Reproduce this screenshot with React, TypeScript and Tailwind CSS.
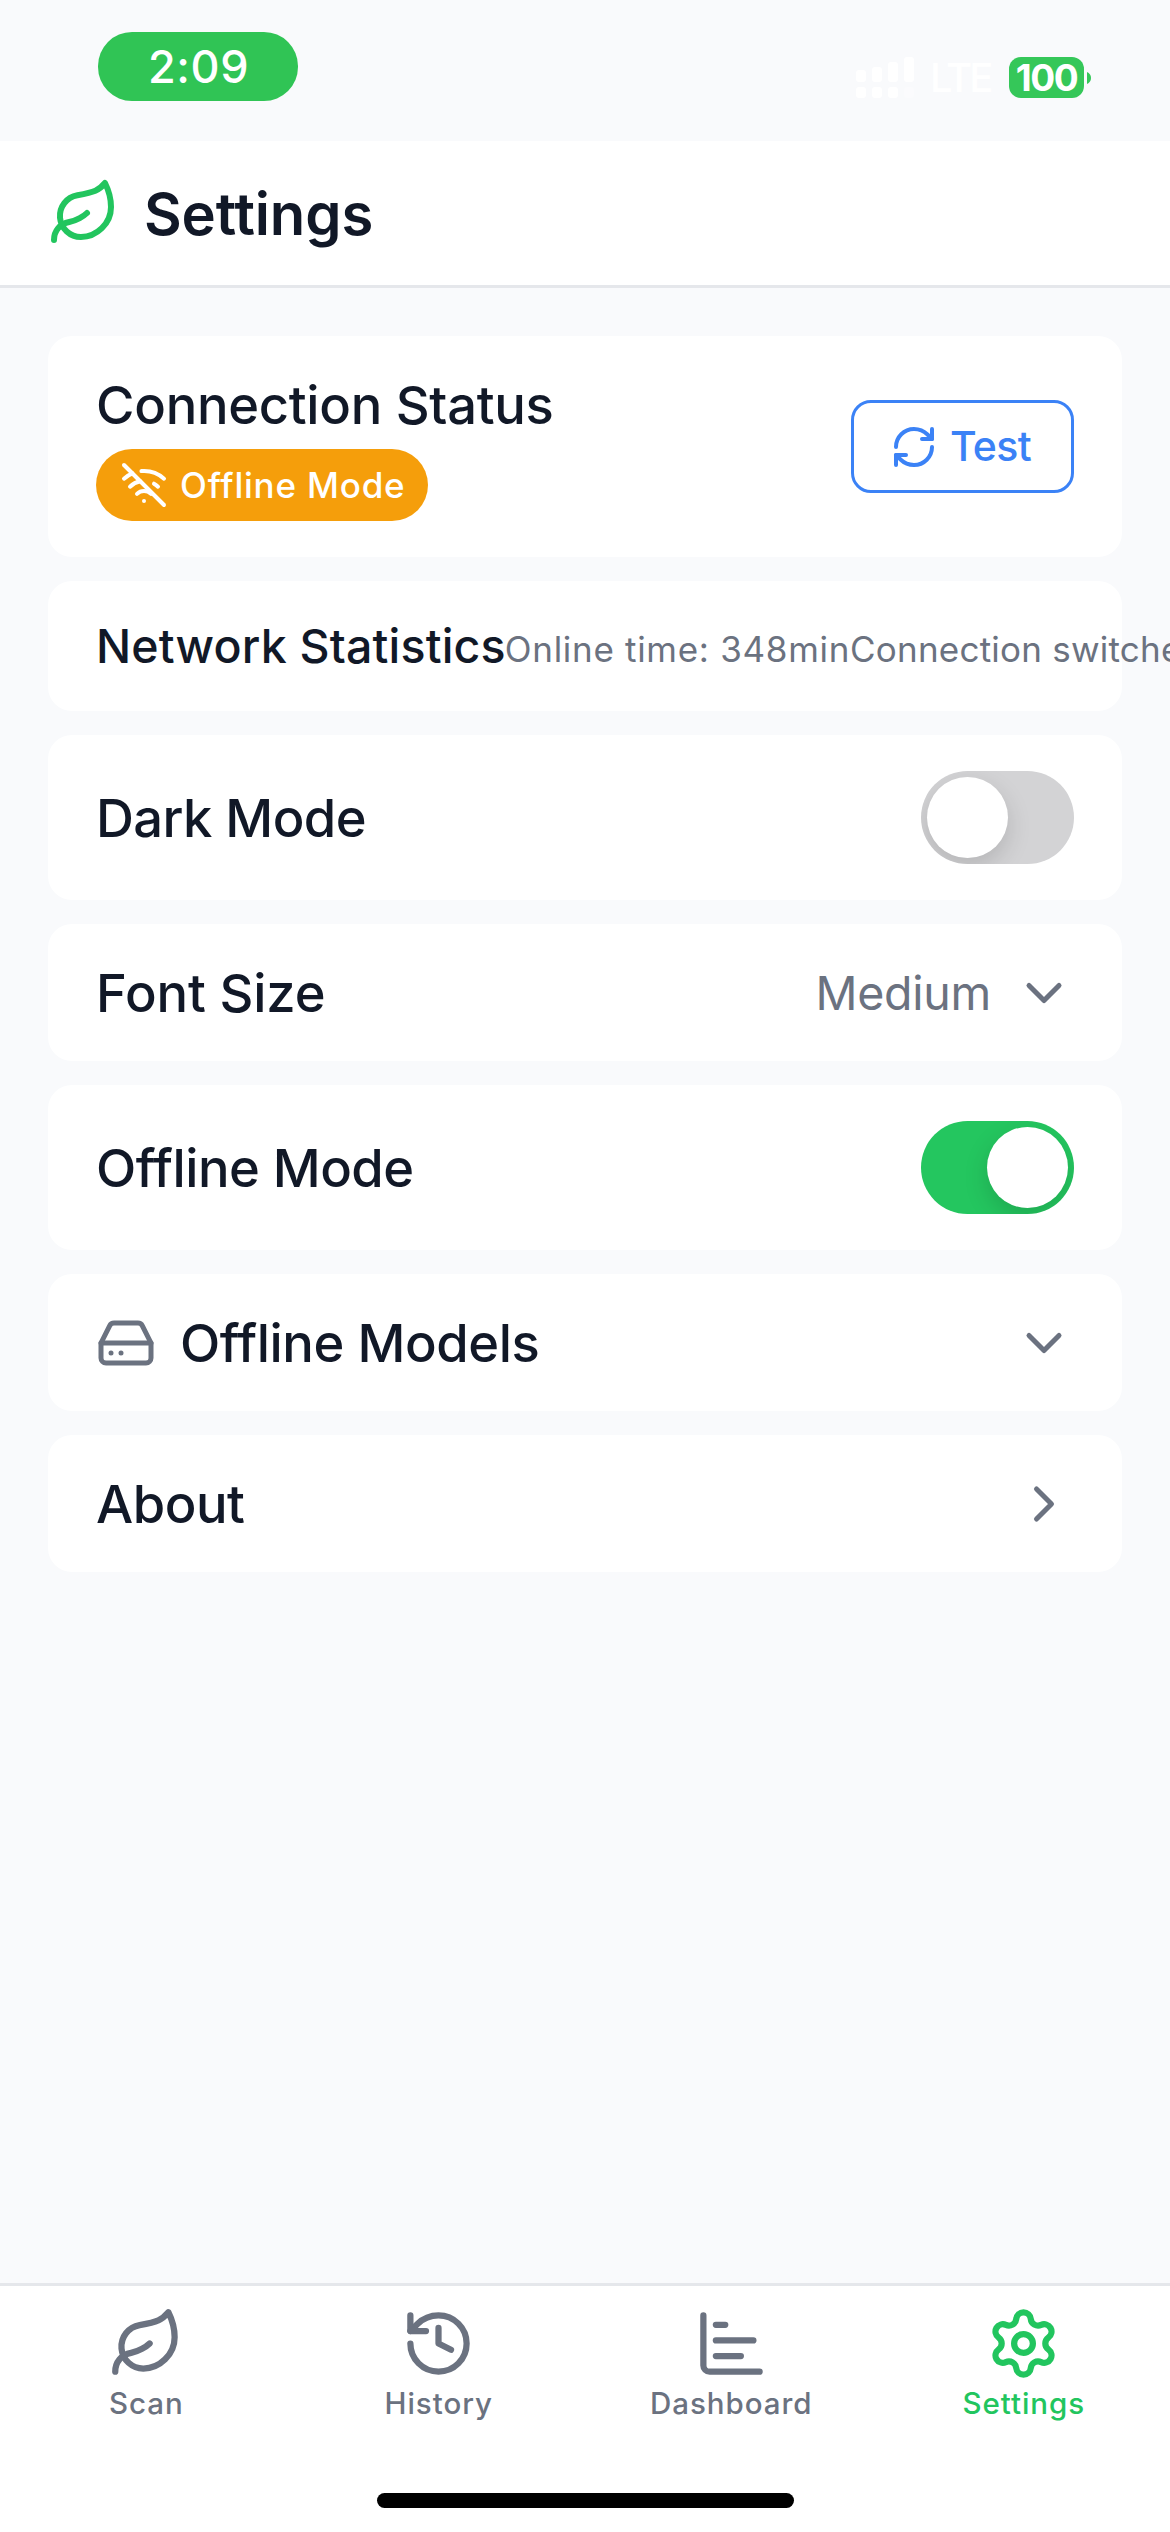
import React, { useState } from 'react';
import {
  ChartBar,
  ChevronDown,
  ChevronRight,
  HardDrive,
  History,
  Leaf,
  RefreshCw,
  Settings,
  WifiOff,
  type LucideIcon
} from 'lucide-react';
import clsx from 'clsx';

interface Tab {
  id: string;
  label: string;
  icon: LucideIcon;
}

const TABS: Tab[] = [
  { id: 'scan', label: 'Scan', icon: Leaf },
  { id: 'history', label: 'History', icon: History },
  { id: 'dashboard', label: 'Dashboard', icon: ChartBar },
  { id: 'settings', label: 'Settings', icon: Settings }
];

const StatusBar = () => (
  <div className="flex h-[141px] shrink-0 items-start justify-between pl-[98px] pr-[79px] pt-8 text-white">
    <div className="flex h-[69px] w-[200px] items-center justify-center rounded-[34px] bg-[#30c455]">
      <span className="pl-px text-[45px] font-[450] leading-none tracking-[0.6px]">2:09</span>
    </div>

    <div className="mt-[25px] flex h-[41px] items-center">
      <svg width="58" height="41" viewBox="0 0 58 41" fill="currentColor">
        <rect x="0" y="13" width="10" height="12" rx="3" />
        <rect x="16" y="10" width="10" height="15" rx="3" />
        <rect x="32" y="5" width="10" height="20" rx="3" />
        <rect x="48" y="0" width="10" height="25" rx="3" />
        <rect x="0" y="30" width="10" height="11" rx="3" />
        <rect x="16" y="30" width="10" height="11" rx="3" />
        <rect x="32" y="30" width="10" height="11" rx="3" />
        <rect x="48" y="30" width="10" height="11" rx="3" opacity="0.3" />
      </svg>
      <span className="ml-4 w-[61px] whitespace-nowrap text-[40px] font-medium leading-none tracking-[-2.9px]">LTE</span>
      <div className="ml-[18px] flex h-[41px] w-[75px] items-center justify-center rounded-[12px] bg-[#35c759]">
        <span className="text-[37px] font-bold leading-none tracking-[-1.4px]">100</span>
      </div>
      <svg className="ml-[3px]" width="4" height="12" viewBox="0 0 4 12">
        <path d="M0 0C2.6 1 4 3.4 4 6s-1.4 5-4 6Z" fill="#35c759" />
      </svg>
    </div>
  </div>
);

const Card = ({ className, children }: { className?: string; children: React.ReactNode }) => (
  <div className={clsx('flex shrink-0 items-center justify-between rounded-3xl bg-white px-12', className)}>
    {children}
  </div>
);

const Toggle = ({ on, onChange }: { on: boolean; onChange: () => void }) => (
  <button
    role="switch"
    aria-checked={on}
    onClick={onChange}
    className={clsx(
      'flex h-[93px] w-[153px] items-center overflow-hidden rounded-full px-1.5',
      on ? 'justify-end bg-[#24c65f]' : 'justify-start bg-[#d3d3d5]'
    )}
  >
    <span className="size-[81px] rounded-full bg-white shadow-[0_9px_24px_rgba(0,0,0,0.15)]" />
  </button>
);

export default function App() {
  const [darkMode, setDarkMode] = useState(false);
  const [offlineMode, setOfflineMode] = useState(true);
  const [activeTab, setActiveTab] = useState('settings');

  return (
    <div className="flex h-[2532px] w-[1170px] flex-col overflow-hidden bg-[#f9fafc] font-['Inter',sans-serif] text-[#111827]">
      <StatusBar />

      <header className="flex h-[147px] shrink-0 items-center gap-6 border-b-[3px] border-[#e5e7eb] bg-white px-12">
        <Leaf size={72} className="text-[#22c55e]" />
        <h1 className="pt-0.5 text-[58px] font-semibold leading-none tracking-[-0.1px]">Settings</h1>
      </header>

      <main className="flex flex-1 flex-col gap-6 px-12 pt-12">
        <Card className="h-[221px]">
          <div className="flex flex-col items-start gap-[11px]">
            <h2 className="text-[52.5px] font-medium leading-[66px] tracking-[-0.29px]">Connection Status</h2>
            <div className="flex h-[72px] w-[332px] items-center gap-3 rounded-full bg-[#f59e0b] pl-6 text-white">
              <WifiOff size={48} />
              <span className="whitespace-nowrap text-[35px] font-[450] leading-none tracking-[0.8px]">Offline Mode</span>
            </div>
          </div>
          <button className="flex h-[93px] w-[223px] items-center gap-3 rounded-[20px] border-[3px] border-[#3b82f6] pl-9 text-[#3b82f6]">
            <RefreshCw size={48} />
            <span className="text-[41px] font-medium leading-none tracking-[-0.7px]">Test</span>
          </button>
        </Card>

        <Card className="h-[130px] whitespace-nowrap">
          <div className="flex w-0 items-center">
            <h3 className="-mr-px text-[46.5px] font-medium leading-none tracking-[0.18px]">Network Statistics</h3>
            <span className="pt-[7px] text-[35px] leading-none tracking-[0.7px] text-[#6b7280]">Online time: 348min</span>
            <span className="pt-[7px] text-[35px] leading-none tracking-[0.22px] text-[#6b7280]">Connection switches</span>
          </div>
        </Card>

        <Card className="h-[165px]">
          <span className="pt-px text-[52.5px] font-medium leading-none tracking-[-0.57px]">Dark Mode</span>
          <Toggle on={darkMode} onChange={() => setDarkMode(!darkMode)} />
        </Card>

        <Card className="h-[137px]">
          <span className="pt-px text-[52.5px] font-medium leading-none tracking-[-0.14px]">Font Size</span>
          <div className="flex items-center gap-[23px] text-[#6b7280]">
            <span className="pt-px text-[46.5px] leading-none tracking-[-0.27px]">Medium</span>
            <ChevronDown size={60} />
          </div>
        </Card>

        <Card className="h-[165px]">
          <span className="pt-px text-[52.5px] font-medium leading-none tracking-[-0.51px]">Offline Mode</span>
          <Toggle on={offlineMode} onChange={() => setOfflineMode(!offlineMode)} />
        </Card>

        <Card className="h-[137px]">
          <div className="flex items-center gap-6">
            <HardDrive size={60} className="text-[#6b7280]" />
            <span className="pt-px text-[52.5px] font-medium leading-none tracking-[-0.42px]">Offline Models</span>
          </div>
          <ChevronDown size={60} className="text-[#6b7280]" />
        </Card>

        <Card className="h-[137px]">
          <span className="pt-px text-[52.5px] font-medium leading-none tracking-[-0.5px]">About</span>
          <ChevronRight size={60} className="text-[#6b7280]" />
        </Card>
      </main>

      <footer className="flex h-[249px] shrink-0 flex-col items-center justify-between border-t-[3px] border-[#e5e7eb] bg-white pb-6 pt-5">
        <nav className="grid w-full grid-cols-4">
          {TABS.map(({ id, label, icon: Icon }) => (
            <button
              key={id}
              onClick={() => setActiveTab(id)}
              className={clsx(
                'flex flex-col items-center gap-1',
                activeTab === id ? 'text-[#22c55e]' : 'text-[#6b7280]'
              )}
            >
              <Icon size={75} />
              <span className="text-[29.5px] font-[470] leading-[37px] tracking-[0.95px]">{label}</span>
            </button>
          ))}
        </nav>
        <div className="h-[15px] w-[417px] rounded-full bg-black" />
      </footer>
    </div>
  );
}
